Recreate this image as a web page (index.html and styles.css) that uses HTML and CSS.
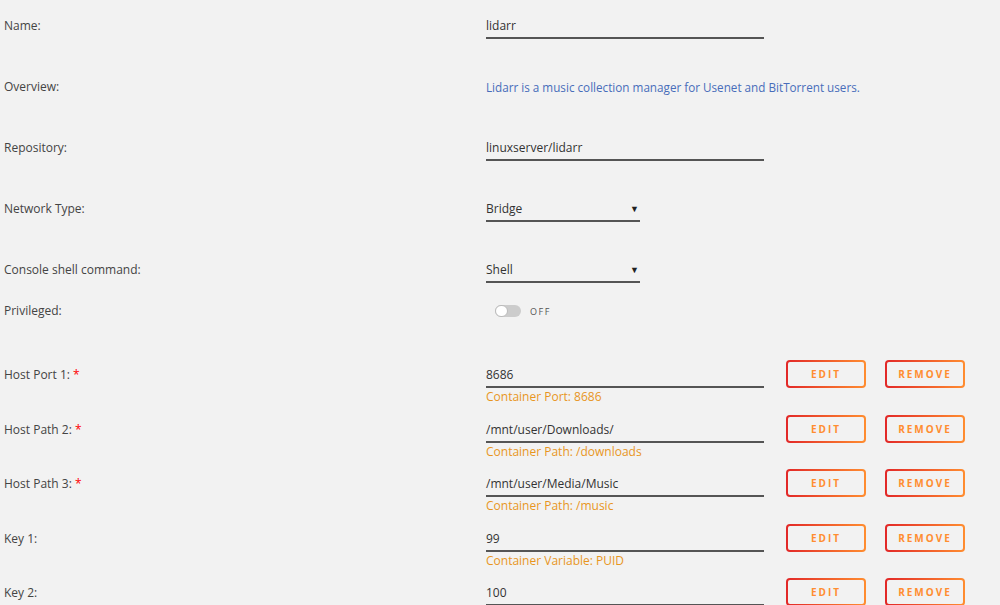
FILE: index.html
```html
<!DOCTYPE html>
<html lang="en">
<head>
    <meta charset="UTF-8">
    <title>Update Container</title>
    <link rel="stylesheet" href="styles.css">
</head>
<body>
    <div class="form">
        <div class="row">
            <div class="label">Name:</div>
            <div class="field"><div class="input">lidarr</div></div>
        </div>
        <div class="row">
            <div class="label">Overview:</div>
            <div class="overview">Lidarr is a music collection manager for Usenet and BitTorrent users.</div>
        </div>
        <div class="row">
            <div class="label">Repository:</div>
            <div class="field"><div class="input">linuxserver/lidarr</div></div>
        </div>
        <div class="row">
            <div class="label">Network Type:</div>
            <div class="select"><span>Bridge</span><span class="arrow">&#9660;</span></div>
        </div>
        <div class="row short">
            <div class="label">Console shell command:</div>
            <div class="select"><span>Shell</span><span class="arrow">&#9660;</span></div>
        </div>
        <div class="row tall">
            <div class="label">Privileged:</div>
            <div class="switch"><span class="track"><span class="knob"></span></span>OFF</div>
        </div>

        <div class="row port">
            <div class="label">Host Port 1: <span class="req">*</span></div>
            <div class="field">
                <div class="input">8686</div>
                <div class="hint">Container Port: 8686</div>
            </div>
            <a href="#" class="btn">EDIT</a>
            <a href="#" class="btn">REMOVE</a>
        </div>
        <div class="row port">
            <div class="label">Host Path 2: <span class="req">*</span></div>
            <div class="field">
                <div class="input">/mnt/user/Downloads/</div>
                <div class="hint">Container Path: /downloads</div>
            </div>
            <a href="#" class="btn">EDIT</a>
            <a href="#" class="btn">REMOVE</a>
        </div>
        <div class="row port">
            <div class="label">Host Path 3: <span class="req">*</span></div>
            <div class="field">
                <div class="input">/mnt/user/Media/Music</div>
                <div class="hint">Container Path: /music</div>
            </div>
            <a href="#" class="btn">EDIT</a>
            <a href="#" class="btn">REMOVE</a>
        </div>
        <div class="row port">
            <div class="label">Key 1:</div>
            <div class="field">
                <div class="input">99</div>
                <div class="hint">Container Variable: PUID</div>
            </div>
            <a href="#" class="btn">EDIT</a>
            <a href="#" class="btn">REMOVE</a>
        </div>
        <div class="row port">
            <div class="label">Key 2:</div>
            <div class="field">
                <div class="input">100</div>
            </div>
            <a href="#" class="btn">EDIT</a>
            <a href="#" class="btn">REMOVE</a>
        </div>
    </div>
</body>
</html>
```

FILE: styles.css
```css
body {
    margin: 0;
    padding: 0;
    background-color: #f2f2f2;
    font-family: "Open Sans", "Noto Sans", sans-serif;
    font-size: 12px;
    color: #444;
    height: 605px;
    overflow: hidden;
}
.form {
    padding: 16px 0 0 4px;
}
.row {
    display: flex;
    align-items: flex-start;
    height: 61px;
}
.row.short {
    height: 41px;
}
.row.tall {
    height: 64px;
}
.row.port {
    height: 54.5px;
}
.label {
    width: 482px;
    flex-shrink: 0;
    line-height: 20px;
}
.req {
    color: #f00;
}
.field {
    width: 278px;
    flex-shrink: 0;
}
.input {
    line-height: 20px;
    padding-bottom: 1px;
    border-bottom: 2px solid #555;
    color: #333;
}
.hint {
    color: #e8961e;
    line-height: 16px;
    margin-top: 1px;
}
.overview {
    line-height: 20px;
    font-size: 11.7px;
    color: #486dba;
}
.select {
    width: 154px;
    display: flex;
    justify-content: space-between;
    line-height: 20px;
    padding-bottom: 1px;
    border-bottom: 2px solid #555;
    color: #333;
}
.arrow {
    font-size: 9px;
    color: #222;
    padding-right: 1px;
}
.switch {
    display: flex;
    align-items: center;
    height: 20px;
    margin-left: 9px;
    font-size: 9px;
    letter-spacing: 1.5px;
    color: #555;
}
.track {
    position: relative;
    width: 26px;
    height: 12px;
    border-radius: 6px;
    background-color: #ccc;
    margin-right: 9px;
}
.knob {
    position: absolute;
    top: 0;
    left: 0;
    width: 11px;
    height: 10px;
    border: 1px solid #bbb;
    border-radius: 6px;
    background-color: #fff;
}
.btn {
    width: 80px;
    height: 28px;
    box-sizing: border-box;
    margin-top: -5px;
    margin-left: 22px;
    display: flex;
    align-items: center;
    justify-content: center;
    border: 2px solid transparent;
    border-radius: 4px;
    background: linear-gradient(#f2f2f2, #f2f2f2) padding-box,
                linear-gradient(90deg, #e22828, #ff8d30) border-box;
    color: #ff8d30;
    font-size: 10px;
    font-weight: bold;
    letter-spacing: 2px;
    text-decoration: none;
}
.btn + .btn {
    margin-left: 19px;
}
```
